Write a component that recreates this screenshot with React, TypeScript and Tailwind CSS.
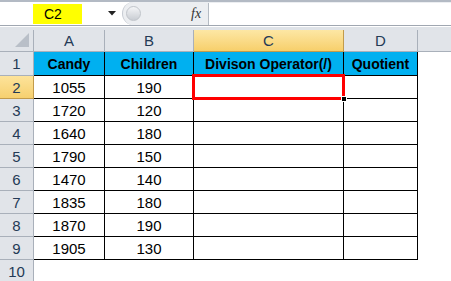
import React from 'react'

const rows: [string, string][] = [
  ['1055', '190'],
  ['1720', '120'],
  ['1640', '180'],
  ['1790', '150'],
  ['1470', '140'],
  ['1835', '180'],
  ['1870', '190'],
  ['1905', '130'],
]

const cols =
  'grid grid-cols-[34px_71px_89px_150px_74px_1fr] grid-rows-[22px_24px_23px_23px_23px_23px_23px_23px_23px_23px_23px]'
const hdr = 'flex items-center justify-center border-r border-b border-[#a9b0ba] bg-[#e1e4e9] text-[15px] leading-none text-[#243a56]'
const cell = 'flex items-center justify-center border-r border-b border-black text-[15px] leading-none text-black'

function FormulaBar() {
  return (
    <div className="flex h-[26px] border-t-2 border-b border-t-[#b3bac4] border-b-[#a0a7b1] bg-white">
      <div className="relative flex w-[122px] items-center">
        <div className="ml-[33px] flex h-[20px] w-[49px] items-center bg-[#ffff00] pl-[11px] text-[14px] leading-none text-black">C2</div>
        <svg className="ml-auto mr-[6px]" width="8" height="5" viewBox="0 0 8 5">
          <path d="M0 0h8L4 4.5z" fill="#222" />
        </svg>
      </div>
      <div className="flex flex-1 items-center rounded-l-[12px] border-l border-[#c6cbd2] bg-[#eceef1]">
        <div className="ml-[3px] h-[15px] w-[15px] rounded-full border border-[#c0c4ca] bg-gradient-to-b from-[#f4f5f7] to-[#c9cdd3]" />
        <span className="ml-[50px] font-['Liberation_Serif',serif] text-[14px] leading-none italic text-[#333]">fx</span>
        <div className="ml-auto h-[22px] w-[243px] border-l border-[#b5bbc3] bg-white" />
      </div>
    </div>
  )
}

export default function App() {
  return (
    <div className="relative h-[281px] w-[451px] overflow-hidden bg-white font-['Liberation_Sans',sans-serif]">
      <FormulaBar />
      <div className="h-[1px] bg-white" />
      <div className="h-[3px] bg-[#dfe3e8]" />

      <div className={cols}>
        <div className="relative border-r border-b border-[#a9b0ba] bg-[#e1e4e9]">
          <svg className="absolute right-[4px] bottom-[4px]" width="14" height="14" viewBox="0 0 14 14">
            <path d="M14 0v14H0z" fill="#b9bfc8" />
          </svg>
        </div>
        <div className={hdr}>A</div>
        <div className={hdr}>B</div>
        <div className="flex items-center justify-center border-r border-b border-[#c29b4b] bg-gradient-to-b from-[#fde7a4] to-[#f7cf6a] text-[15px] leading-none text-[#243a56]">C</div>
        <div className={hdr}>D</div>
        <div className="border-b border-[#a9b0ba] bg-[#e1e4e9]" />

        <div className={hdr}>1</div>
        {['Candy', 'Children', 'Divison Operator(/)', 'Quotient'].map((t) => (
          <div key={t} className="flex items-center justify-center border-r border-b border-black bg-[#00b0f0] text-[14px] leading-none font-bold text-black">
            {t}
          </div>
        ))}
        <div />

        {rows.map(([a, b], i) => (
          <React.Fragment key={i}>
            <div
              className={
                i === 0
                  ? 'flex items-center justify-center border-r border-b border-[#c29b4b] bg-gradient-to-b from-[#fde39a] to-[#f6d06f] text-[15px] leading-none text-[#243a56]'
                  : hdr
              }
            >
              {i + 2}
            </div>
            <div className={cell}>{a}</div>
            <div className={cell}>{b}</div>
            <div className={cell} />
            <div className={cell} />
            <div />
          </React.Fragment>
        ))}

        <div className={hdr}>10</div>
        <div />
        <div />
        <div />
        <div />
        <div />
      </div>

      <div className="absolute left-[192px] top-[74px] h-[26px] w-[153px] border-[3px] border-[#ff0000]" />
      <div className="absolute left-[341px] top-[96px] h-[6px] w-[6px] border border-white bg-black" />
    </div>
  )
}
